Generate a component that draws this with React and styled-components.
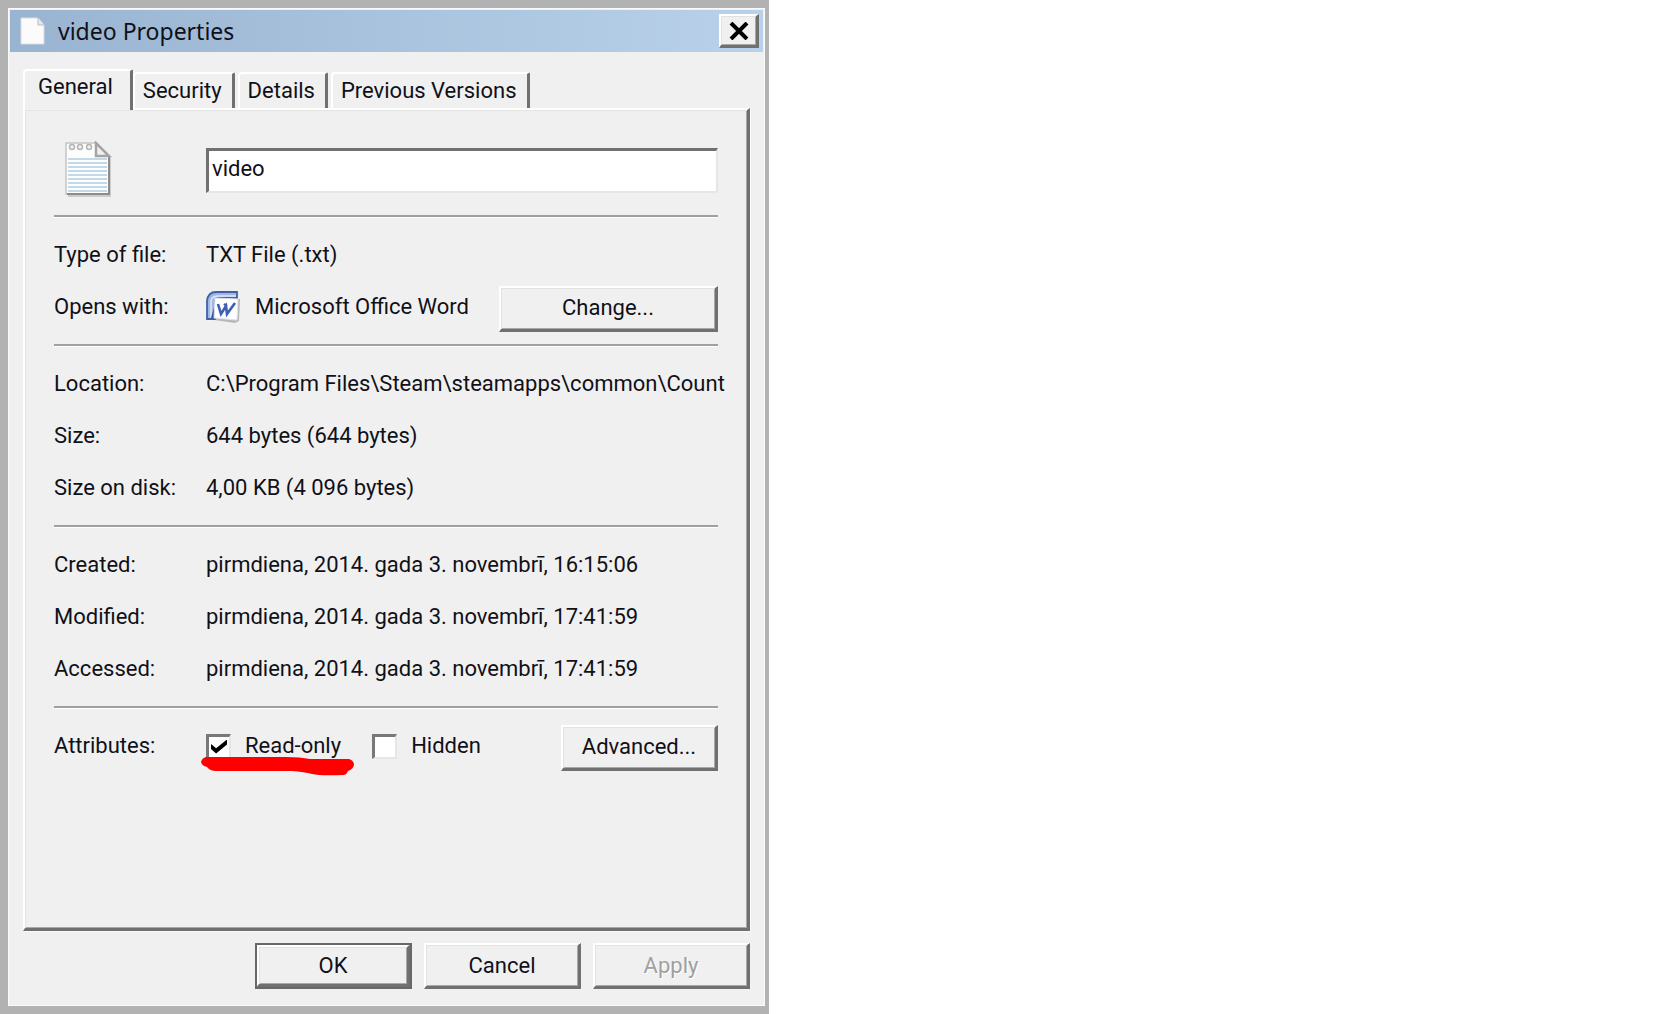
import React, { useState } from "react";
import styled, { createGlobalStyle, css } from "styled-components";

const GlobalStyle = createGlobalStyle`
  * { box-sizing: border-box; }
  body {
    margin: 0;
    background: #fff;
    color: #101018;
    font-family: Roboto, "Liberation Sans", sans-serif;
    font-size: 22px;
    line-height: 28px;
  }
  button, input { font: inherit; color: inherit; margin: 0; }
  svg { display: block; }
`;

const raised = css`
  border-style: solid;
  border-width: 2px 3px 3px 2px;
  border-color: #fff #707070 #707070 #fff;
  box-shadow: inset 1px 1px 0 #e2e2e2, inset -1px -1px 0 #a8a8a8;
  background: #f0f0f0;
`;

const Dialog = styled.main`
  display: flex;
  flex-direction: column;
  width: 100%;
  max-width: 769px;
  min-height: 100vh;
  padding: 1px;
  border: solid #b2b2b2;
  border-width: 8px 4px 8px 8px;
  background: #f0f0f0;
  box-shadow: inset 0 0 0 1px #fafafa;
`;

const TitleBar = styled.header`
  display: flex;
  align-items: center;
  gap: 13px;
  height: 42px;
  margin: 1px 1px 0;
  padding: 0 4px 0 10px;
  background: linear-gradient(90deg, #99b4d1, #b9d1ea);
`;

const Title = styled.h1`
  flex: 1;
  margin: 0;
  font: 400 23px/28px "Noto Sans", "Open Sans", sans-serif;
`;

const CloseButton = styled.button`
  ${raised}
  display: grid;
  place-items: center;
  width: 40px;
  height: 34px;
  padding: 0;
`;

const Body = styled.div`
  display: flex;
  flex: 1;
  flex-direction: column;
  padding: 17px 14px 16px;
`;

const TabList = styled.div`
  display: flex;
  align-items: flex-end;
  gap: 3px;
`;

const Tab = styled.button`
  position: relative;
  height: ${(p) => (p.$active ? 41 : 36)}px;
  margin: ${(p) => (p.$active ? "0 -3px -2px 0" : "0")};
  padding: ${(p) => (p.$active ? "0 17px 7px 13px" : "0 10px 1px 8px")};
  border: solid;
  border-width: 2px 3px 0 2px;
  border-color: #fff #707070 #fff #fff;
  border-radius: 4px 2px 0 0;
  background: #f0f0f0;
  white-space: nowrap;
`;

const Panel = styled.section`
  flex: 1;
  padding: 31px 29px 20px;
  border: solid;
  border-width: 2px 3px 3px 2px;
  border-color: #fff #707070 #707070 #fff;
  box-shadow: inset 1px 1px 0 #e4e4e4, inset -1px -1px 0 #a8a8a8, 1px 1px 0 #fafafa;
`;

const Group = styled.div`
  padding: 12px 0 11px;
  border-top: 2px solid #a0a0a0;
  box-shadow: inset 0 1px 0 #fff;
`;

const Row = styled.div`
  display: grid;
  grid-template-columns: 152px minmax(0, 1fr);
  align-items: center;
  height: 52px;
`;

const NameRow = styled(Row)`
  height: 74px;
  padding-bottom: 18px;
`;

const IconCell = styled.div`
  padding-left: 10px;
`;

const Value = styled.div`
  display: flex;
  align-items: center;
  white-space: nowrap;
`;

const AppName = styled.span`
  flex: 1;
  margin-left: 14px;
`;

const NameInput = styled.input`
  width: 100%;
  height: 45px;
  padding: 0 4px 4px 3px;
  border: solid;
  border-width: 3px 2px 2px 3px;
  border-color: #707070 #e6e6e6 #e6e6e6 #707070;
  border-radius: 0;
  outline: none;
  background: #fff;
`;

const Button = styled.button`
  ${raised}
  width: 157px;
  height: 46px;
  padding: 0;
  outline: ${(p) => (p.$primary ? "2px solid #686868" : "none")};
  outline-offset: -2px;
  ${(p) => p.$primary && css`
    border-width: 4px 5px 5px 4px;
  `}
  &:disabled {
    color: #a0a0a0;
    text-shadow: 1px 1px 0 #fff;
  }
`;

const RowButton = styled(Button)`
  width: ${(p) => (p.$wide ? 219 : 157)}px;
  margin-top: 3px;
`;

const CheckLabel = styled.label`
  position: relative;
  display: flex;
  align-items: center;
  gap: 14px;
  margin-right: 31px;
`;

const Checkbox = styled.input`
  appearance: none;
  display: grid;
  place-items: center;
  width: 25px;
  height: 25px;
  border: solid;
  border-width: 3px 2px 2px 3px;
  border-color: #787878 #e6e6e6 #e6e6e6 #787878;
  background: #fff;
  &:checked::after {
    content: "";
    width: 16px;
    height: 14px;
    background: #000;
    clip-path: polygon(0 32%, 32% 62%, 100% 0, 100% 36%, 32% 100%, 0 68%);
  }
`;

const Marker = styled.svg`
  position: absolute;
  left: -6px;
  top: 24px;
  pointer-events: none;
`;

const Spacer = styled.span`
  flex: 1;
`;

const Footer = styled.footer`
  display: flex;
  justify-content: flex-end;
  gap: 12px;
  padding-top: 12px;
`;

const PageIcon = () => (
  <svg width="25" height="28" viewBox="0 0 25 28" aria-hidden="true">
    <path d="M1 1h17l6 7v19H1z" fill="#fbfbfb" stroke="#d8dce0" />
    <path d="M18 1v7h6" fill="#e8e8e8" stroke="#b8bcc0" />
  </svg>
);

const NotepadIcon = () => (
  <svg width="50" height="58" viewBox="0 0 50 58" aria-hidden="true">
    <path d="M4 4h30l13 13v39H4z" fill="#b4b4b4" opacity=".6" />
    <path d="M2 2h30l13 13v38H2z" fill="#fdfdfd" stroke="#c4c4c4" strokeWidth="1.5" />
    <path d="M45 16v37H3" fill="none" stroke="#8c8c8c" strokeWidth="2" />
    <g stroke="#c4d9e7" strokeWidth="2">
      {[18, 22, 26, 30, 34, 38, 42, 46, 50].map((y) => (
        <path key={y} d={`M4 ${y}H43`} />
      ))}
    </g>
    <path d="M32 2v13h13z" fill="#f0f0f0" stroke="#a4a4a4" strokeWidth="2.5" />
    {[8, 16, 25].map((x) => (
      <circle key={x} cx={x} cy="6" r="2.5" fill="#f2f2f2" stroke="#b4b4b4" strokeWidth="1.5" />
    ))}
  </svg>
);

const WordIcon = () => (
  <svg width="35" height="34" viewBox="0 0 35 34" aria-hidden="true">
    <path d="M9 7l25 2-1 22-4 2-21-3z" fill="#b8b8b8" />
    <path d="M1 29V11q1-9 9-9h21v6H13q-4 0-4 5v16z" fill="#9fb7e3" stroke="#4160a8" strokeWidth="1.8" />
    <path d="M5 28V12q0-6 7-6h18" fill="none" stroke="#e0e9fa" strokeWidth="1.5" />
    <path d="M5 28l4-14v14z" fill="#3156a5" />
    <path d="M9 8l23 1-1 21-23-2z" fill="#fff" stroke="#dde3ef" />
    <path d="M12 14l3 10 5-8 1 8 8-11M18 14l3 2" fill="none" stroke="#3e5fb4" strokeWidth="2.6" />
  </svg>
);

const dates = [
  ["Created:", "pirmdiena, 2014. gada 3. novembrī, 16:15:06"],
  ["Modified:", "pirmdiena, 2014. gada 3. novembrī, 17:41:59"],
  ["Accessed:", "pirmdiena, 2014. gada 3. novembrī, 17:41:59"],
];

const tabs = ["General", "Security", "Details", "Previous Versions"];

export default function App() {
  const [readOnly, setReadOnly] = useState(true);
  const [hidden, setHidden] = useState(false);
  return (
    <>
      <GlobalStyle />
      <Dialog>
        <TitleBar>
          <PageIcon />
          <Title>video Properties</Title>
          <CloseButton aria-label="Close">
            <svg width="20" height="18" viewBox="0 0 20 18" aria-hidden="true">
              <path d="M2 1l16 16M18 1L2 17" stroke="#000" strokeWidth="4" />
            </svg>
          </CloseButton>
        </TitleBar>
        <Body>
          <TabList role="tablist">
            {tabs.map((name, i) => (
              <Tab key={name} role="tab" aria-selected={i === 0} $active={i === 0}>
                {name}
              </Tab>
            ))}
          </TabList>
          <Panel role="tabpanel" aria-label="General">
            <NameRow>
              <IconCell>
                <NotepadIcon />
              </IconCell>
              <NameInput aria-label="File name" defaultValue="video" />
            </NameRow>
            <Group>
              <Row>
                <span>Type of file:</span>
                <Value>TXT File (.txt)</Value>
              </Row>
              <Row>
                <span>Opens with:</span>
                <Value>
                  <WordIcon />
                  <AppName>Microsoft Office Word</AppName>
                  <RowButton $wide>Change...</RowButton>
                </Value>
              </Row>
            </Group>
            <Group>
              <Row>
                <span>Location:</span>
                <Value>C:\Program Files\Steam\steamapps\common\Count</Value>
              </Row>
              <Row>
                <span>Size:</span>
                <Value>644 bytes (644 bytes)</Value>
              </Row>
              <Row>
                <span>Size on disk:</span>
                <Value>4,00 KB (4 096 bytes)</Value>
              </Row>
            </Group>
            <Group>
              {dates.map(([label, value]) => (
                <Row key={label}>
                  <span>{label}</span>
                  <Value>{value}</Value>
                </Row>
              ))}
            </Group>
            <Group>
              <Row>
                <span>Attributes:</span>
                <Value>
                  <CheckLabel>
                    <Checkbox type="checkbox" checked={readOnly} onChange={(e) => setReadOnly(e.target.checked)} />
                    Read-only
                    <Marker width="156" height="22" viewBox="0 0 156 22" aria-hidden="true">
                      <path
                        d="M6 1Q2 2 1 6Q2 10 7 11Q10 15 16 15H92Q104 16 112 18Q120 20 144 19Q147 18 148 15Q154 13 154 8Q153 4 149 3H110Q100 1 86 1Z"
                        fill="#fe0000"
                      />
                    </Marker>
                  </CheckLabel>
                  <CheckLabel>
                    <Checkbox type="checkbox" checked={hidden} onChange={(e) => setHidden(e.target.checked)} />
                    Hidden
                  </CheckLabel>
                  <Spacer />
                  <RowButton>Advanced...</RowButton>
                </Value>
              </Row>
            </Group>
          </Panel>
          <Footer>
            <Button $primary>OK</Button>
            <Button>Cancel</Button>
            <Button disabled>Apply</Button>
          </Footer>
        </Body>
      </Dialog>
    </>
  );
}
